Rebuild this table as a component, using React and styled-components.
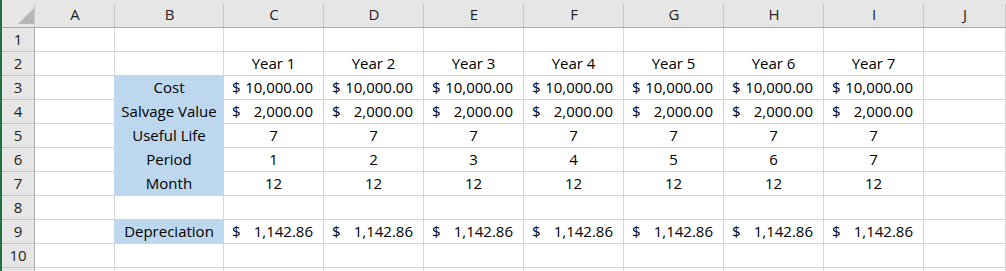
import React from 'react';
import styled, { createGlobalStyle, css } from 'styled-components';

const GlobalStyle = createGlobalStyle`
  html, body {
    margin: 0;
    padding: 0;
    background: #fff;
    overflow: hidden;
  }
  body {
    font-family: "Open Sans", "Liberation Sans", sans-serif;
    font-size: 15px;
    color: #000;
  }
`;

const FILL = '#BDD7EE';
const GRID = '#D4D4D4';
const HEAD_BG = '#E6E6E6';
const HEAD_LINE = '#ABABAB';
const HEAD_SEP = '#C6C6C6';

const Sheet = styled.div`
  display: grid;
  grid-template-columns: 33px 80px 109px repeat(7, 100px) 82px;
  grid-template-rows: 28px repeat(11, 24px);
  border-left: 2px solid #217346;
  height: 271px;
  overflow: hidden;
`;

const headBase = css`
  position: relative;
  box-sizing: border-box;
  background: ${HEAD_BG};
  color: #222;
  text-align: center;
  white-space: nowrap;
`;

const Corner = styled.div`
  ${headBase}
  border-bottom: 1px solid ${HEAD_LINE};
  &::after {
    content: '';
    position: absolute;
    top: 4px;
    right: 0;
    bottom: 0;
    border-right: 1px solid ${HEAD_SEP};
  }
  svg {
    position: absolute;
    left: 13px;
    top: 8px;
  }
`;

const ColHeader = styled.div`
  ${headBase}
  border-bottom: 1px solid ${HEAD_LINE};
  line-height: 21px;
  padding-top: 4px;
  &::after {
    content: '';
    position: absolute;
    top: 4px;
    right: 0;
    bottom: 0;
    border-right: 1px solid ${HEAD_SEP};
  }
`;

const RowHeader = styled.div`
  ${headBase}
  border-right: 1px solid ${HEAD_LINE};
  border-bottom: 1px solid ${HEAD_SEP};
  line-height: 21px;
  padding-top: 1px;
`;

const Cell = styled.div`
  box-sizing: border-box;
  border-right: 1px solid ${p => (p.$fill ? p.$fill : GRID)};
  border-bottom: 1px solid ${p => (p.$fill ? p.$fill : GRID)};
  background: ${p => p.$fill || '#fff'};
  box-shadow: ${p => (p.$fill ? `-1px -1px 0 0 ${p.$fill}` : 'none')};
  line-height: 21px;
  padding-top: 1px;
  white-space: nowrap;
  overflow: hidden;
  text-align: ${p => p.$align || 'left'};
`;

const Money = styled(Cell)`
  display: flex;
  justify-content: space-between;
  padding-left: 8px;
  padding-right: 10px;
`;

const columns = ['A', 'B', 'C', 'D', 'E', 'F', 'G', 'H', 'I', 'J'];
const years = [1, 2, 3, 4, 5, 6, 7];

const rows = {
  2: { values: years.map(y => `Year ${y}`), kind: 'center' },
  3: { label: 'Cost', values: years.map(() => '10,000.00'), kind: 'money' },
  4: { label: 'Salvage Value', values: years.map(() => '2,000.00'), kind: 'money' },
  5: { label: 'Useful Life', values: years.map(() => '7'), kind: 'center' },
  6: { label: 'Period', values: years.map(y => String(y)), kind: 'center' },
  7: { label: 'Month', values: years.map(() => '12'), kind: 'center' },
  9: { label: 'Depreciation', values: years.map(() => '1,142.86'), kind: 'money' },
};

function DataCell({ kind, value }) {
  if (value === undefined) return <Cell />;
  if (kind === 'money') {
    return (
      <Money>
        <span>$</span>
        <span>{value}</span>
      </Money>
    );
  }
  return <Cell $align="center">{value}</Cell>;
}

// row 11 only peeks in at the bottom edge, so its number is left off
function SheetRow({ n }) {
  const row = rows[n] || {};
  return (
    <>
      <RowHeader>{n <= 10 ? n : ''}</RowHeader>
      <Cell />
      {row.label ? <Cell $fill={FILL} $align="center">{row.label}</Cell> : <Cell />}
      {years.map((y, i) => (
        <DataCell key={y} kind={row.kind} value={row.values ? row.values[i] : undefined} />
      ))}
      <Cell />
    </>
  );
}

export default function App() {
  return (
    <>
      <GlobalStyle />
      <Sheet>
        <Corner>
          <svg width="19" height="17" viewBox="0 0 19 17">
            <polygon points="19,0 19,16 3,16" fill="#B6B6B6" />
          </svg>
        </Corner>
        {columns.map(c => (
          <ColHeader key={c}>{c}</ColHeader>
        ))}
        {Array.from({ length: 11 }, (_, i) => (
          <SheetRow key={i + 1} n={i + 1} />
        ))}
      </Sheet>
    </>
  );
}
